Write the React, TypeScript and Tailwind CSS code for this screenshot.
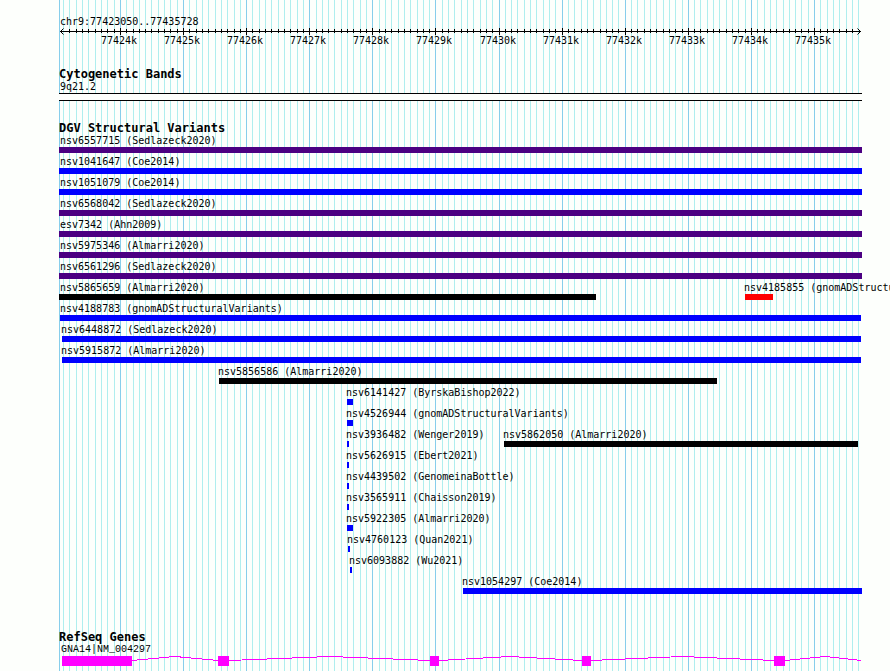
import React from "react";

const REGION_START = 77423050;
const REGION_END = 77435728;
const TRACK = 803;
const PLOT = 800;

type Feature = { name: string; start: number; end: number; color: string };

const PURPLE = "bg-[#4b0082]";
const BLUE = "bg-[#0000ff]";
const BLACK = "bg-black";
const RED = "bg-[#ff0000]";

const f = (name: string, start: number, end: number, color: string): Feature => ({
  name,
  start,
  end,
  color,
});

// Offsets are in track units, measured from the left border of the track.
const ROWS: Feature[][] = [
  [f("nsv6557715 (Sedlazeck2020)", 0, 803, PURPLE)],
  [f("nsv1041647 (Coe2014)", 0, 803, BLUE)],
  [f("nsv1051079 (Coe2014)", 0, 803, BLUE)],
  [f("nsv6568042 (Sedlazeck2020)", 0, 803, PURPLE)],
  [f("esv7342 (Ahn2009)", 0, 803, PURPLE)],
  [f("nsv5975346 (Almarri2020)", 0, 803, PURPLE)],
  [f("nsv6561296 (Sedlazeck2020)", 0, 803, PURPLE)],
  [
    f("nsv5865659 (Almarri2020)", 0, 537, BLACK),
    f("nsv4185855 (gnomADStructuralVariants)", 686, 714, RED),
  ],
  [f("nsv4188783 (gnomADStructuralVariants)", 1, 802, BLUE)],
  [f("nsv6448872 (Sedlazeck2020)", 3, 802, BLUE)],
  [f("nsv5915872 (Almarri2020)", 3, 802, BLUE)],
  [f("nsv5856586 (Almarri2020)", 160, 658, BLACK)],
  [f("nsv6141427 (ByrskaBishop2022)", 288, 294, BLUE)],
  [f("nsv4526944 (gnomADStructuralVariants)", 288, 294, BLUE)],
  [
    f("nsv3936482 (Wenger2019)", 288, 290, BLUE),
    f("nsv5862050 (Almarri2020)", 445, 799, BLACK),
  ],
  [f("nsv5626915 (Ebert2021)", 288, 290, BLUE)],
  [f("nsv4439502 (GenomeinaBottle)", 288, 290, BLUE)],
  [f("nsv3565911 (Chaisson2019)", 288, 290, BLUE)],
  [f("nsv5922305 (Almarri2020)", 288, 294, BLUE)],
  [f("nsv4760123 (Quan2021)", 289, 291, BLUE)],
  [f("nsv6093882 (Wu2021)", 291, 293, BLUE)],
  [f("nsv1054297 (Coe2014)", 404, 803, BLUE)],
];

const EXONS = [
  [3, 73],
  [159, 170],
  [371, 380],
  [523, 532],
  [715, 726],
];

const INTRONS = [
  [73, 116, 159],
  [170, 271, 371],
  [380, 451, 523],
  [532, 623, 715],
  [726, 766, 802],
];

const pct = (v: number) => `${(v / TRACK) * 100}%`;

const TICKS = Array.from({ length: 127 }, (_, i) => {
  const bp = 77423100 + i * 100;
  const offset = 1 + Math.round(((bp - REGION_START) * PLOT) / (REGION_END - REGION_START));
  return { bp, offset, major: bp % 1000 === 0 };
});

function GridLines() {
  return (
    <svg className="absolute inset-0 -z-10 h-full w-full" shapeRendering="crispEdges" aria-hidden="true">
      <rect x="0" y="0" width="1" height="100%" fill="#87ceeb" />
      {TICKS.map((t) => (
        <rect
          key={t.bp}
          x={pct(t.offset)}
          y="0"
          width="1"
          height="100%"
          fill={t.major ? "#87ceeb" : "#afeeee"}
        />
      ))}
    </svg>
  );
}

function Ruler() {
  return (
    <svg className="block h-[18px] w-full overflow-visible" role="img" aria-label="Position ruler">
      <g shapeRendering="crispEdges">
        <rect x={pct(1)} y="3" width={pct(801)} height="1" fill="black" />
        {TICKS.slice(1, -1).map((t) => (
          <rect
            key={t.bp}
            x={pct(t.offset)}
            y={t.major ? 0 : 1}
            width="1"
            height={t.major ? 7 : 4}
            fill="black"
          />
        ))}
      </g>
      <path d="M4.5 0.5 L1.5 3.5 L4.5 6.5" fill="none" stroke="black" />
      <svg x={pct(802)} y="0" className="overflow-visible">
        <path d="M-3.5 0.5 L-0.5 3.5 L-3.5 6.5" fill="none" stroke="black" />
      </svg>
      {TICKS.filter((t) => t.major).map((t) => (
        <text key={t.bp} x={pct(t.offset - 1)} y="16" textAnchor="middle">
          {t.bp / 1000}k
        </text>
      ))}
    </svg>
  );
}

function Heading({ children }: { children: React.ReactNode }) {
  return <h2 className="h-3 text-[12px] leading-4 font-bold">{children}</h2>;
}

function Label({ offset, children }: { offset: number; children: React.ReactNode }) {
  return (
    <div className="relative z-10 h-[15px] leading-[17px]" style={{ paddingLeft: pct(offset) }}>
      {children}
    </div>
  );
}

function Variant({ feature }: { feature: Feature }) {
  return (
    <li className="col-start-1 row-start-1 min-w-0">
      <Label offset={Math.max(1, feature.start - 1)}>{feature.name}</Label>
      <div
        className={`h-1.5 ${feature.color}`}
        style={{ marginLeft: pct(feature.start), width: pct(feature.end - feature.start) }}
      />
    </li>
  );
}

export default function App() {
  return (
    <div className="min-h-screen overflow-hidden bg-[#fdfffc] pr-7 pl-[59px] font-['DejaVu_Sans_Mono','Liberation_Mono',monospace] text-[10px] whitespace-nowrap text-black">
      <main className="relative isolate min-h-screen pt-[13px] pb-[5px]">
        <GridLines />

        <header>
          <Label offset={1}>chr9:77423050..77435728</Label>
          <Ruler />
        </header>

        <section className="mt-5">
          <Heading>Cytogenetic Bands</Heading>
          <Label offset={1}>9q21.2</Label>
          <div className="h-2 border-y border-black bg-[#fdfffc]" />
        </section>

        <section className="mt-[19px]">
          <Heading>DGV Structural Variants</Heading>
          {ROWS.map((row) => (
            <ul key={row[0].name} className="grid grid-cols-1">
              {row.map((feature) => (
                <Variant key={feature.name} feature={feature} />
              ))}
            </ul>
          ))}
        </section>

        <section className="mt-[35px]">
          <Heading>RefSeq Genes</Heading>
          <div className="font-['Liberation_Mono',monospace]">
            <Label offset={2}>GNA14|NM_004297</Label>
          </div>
          <svg
            className="block h-2.5 w-full"
            viewBox="0 0 803 10"
            preserveAspectRatio="none"
            shapeRendering="crispEdges"
            role="img"
            aria-label="GNA14 gene model"
          >
            {INTRONS.map(([a, peak, b]) => (
              <polyline
                key={a}
                points={`${a},4.5 ${peak},0.5 ${b},4.5`}
                fill="none"
                stroke="#ff00ff"
              />
            ))}
            {EXONS.map(([a, b]) => (
              <rect key={a} x={a} y="0" width={b - a} height="10" fill="#ff00ff" />
            ))}
          </svg>
        </section>
      </main>
    </div>
  );
}
